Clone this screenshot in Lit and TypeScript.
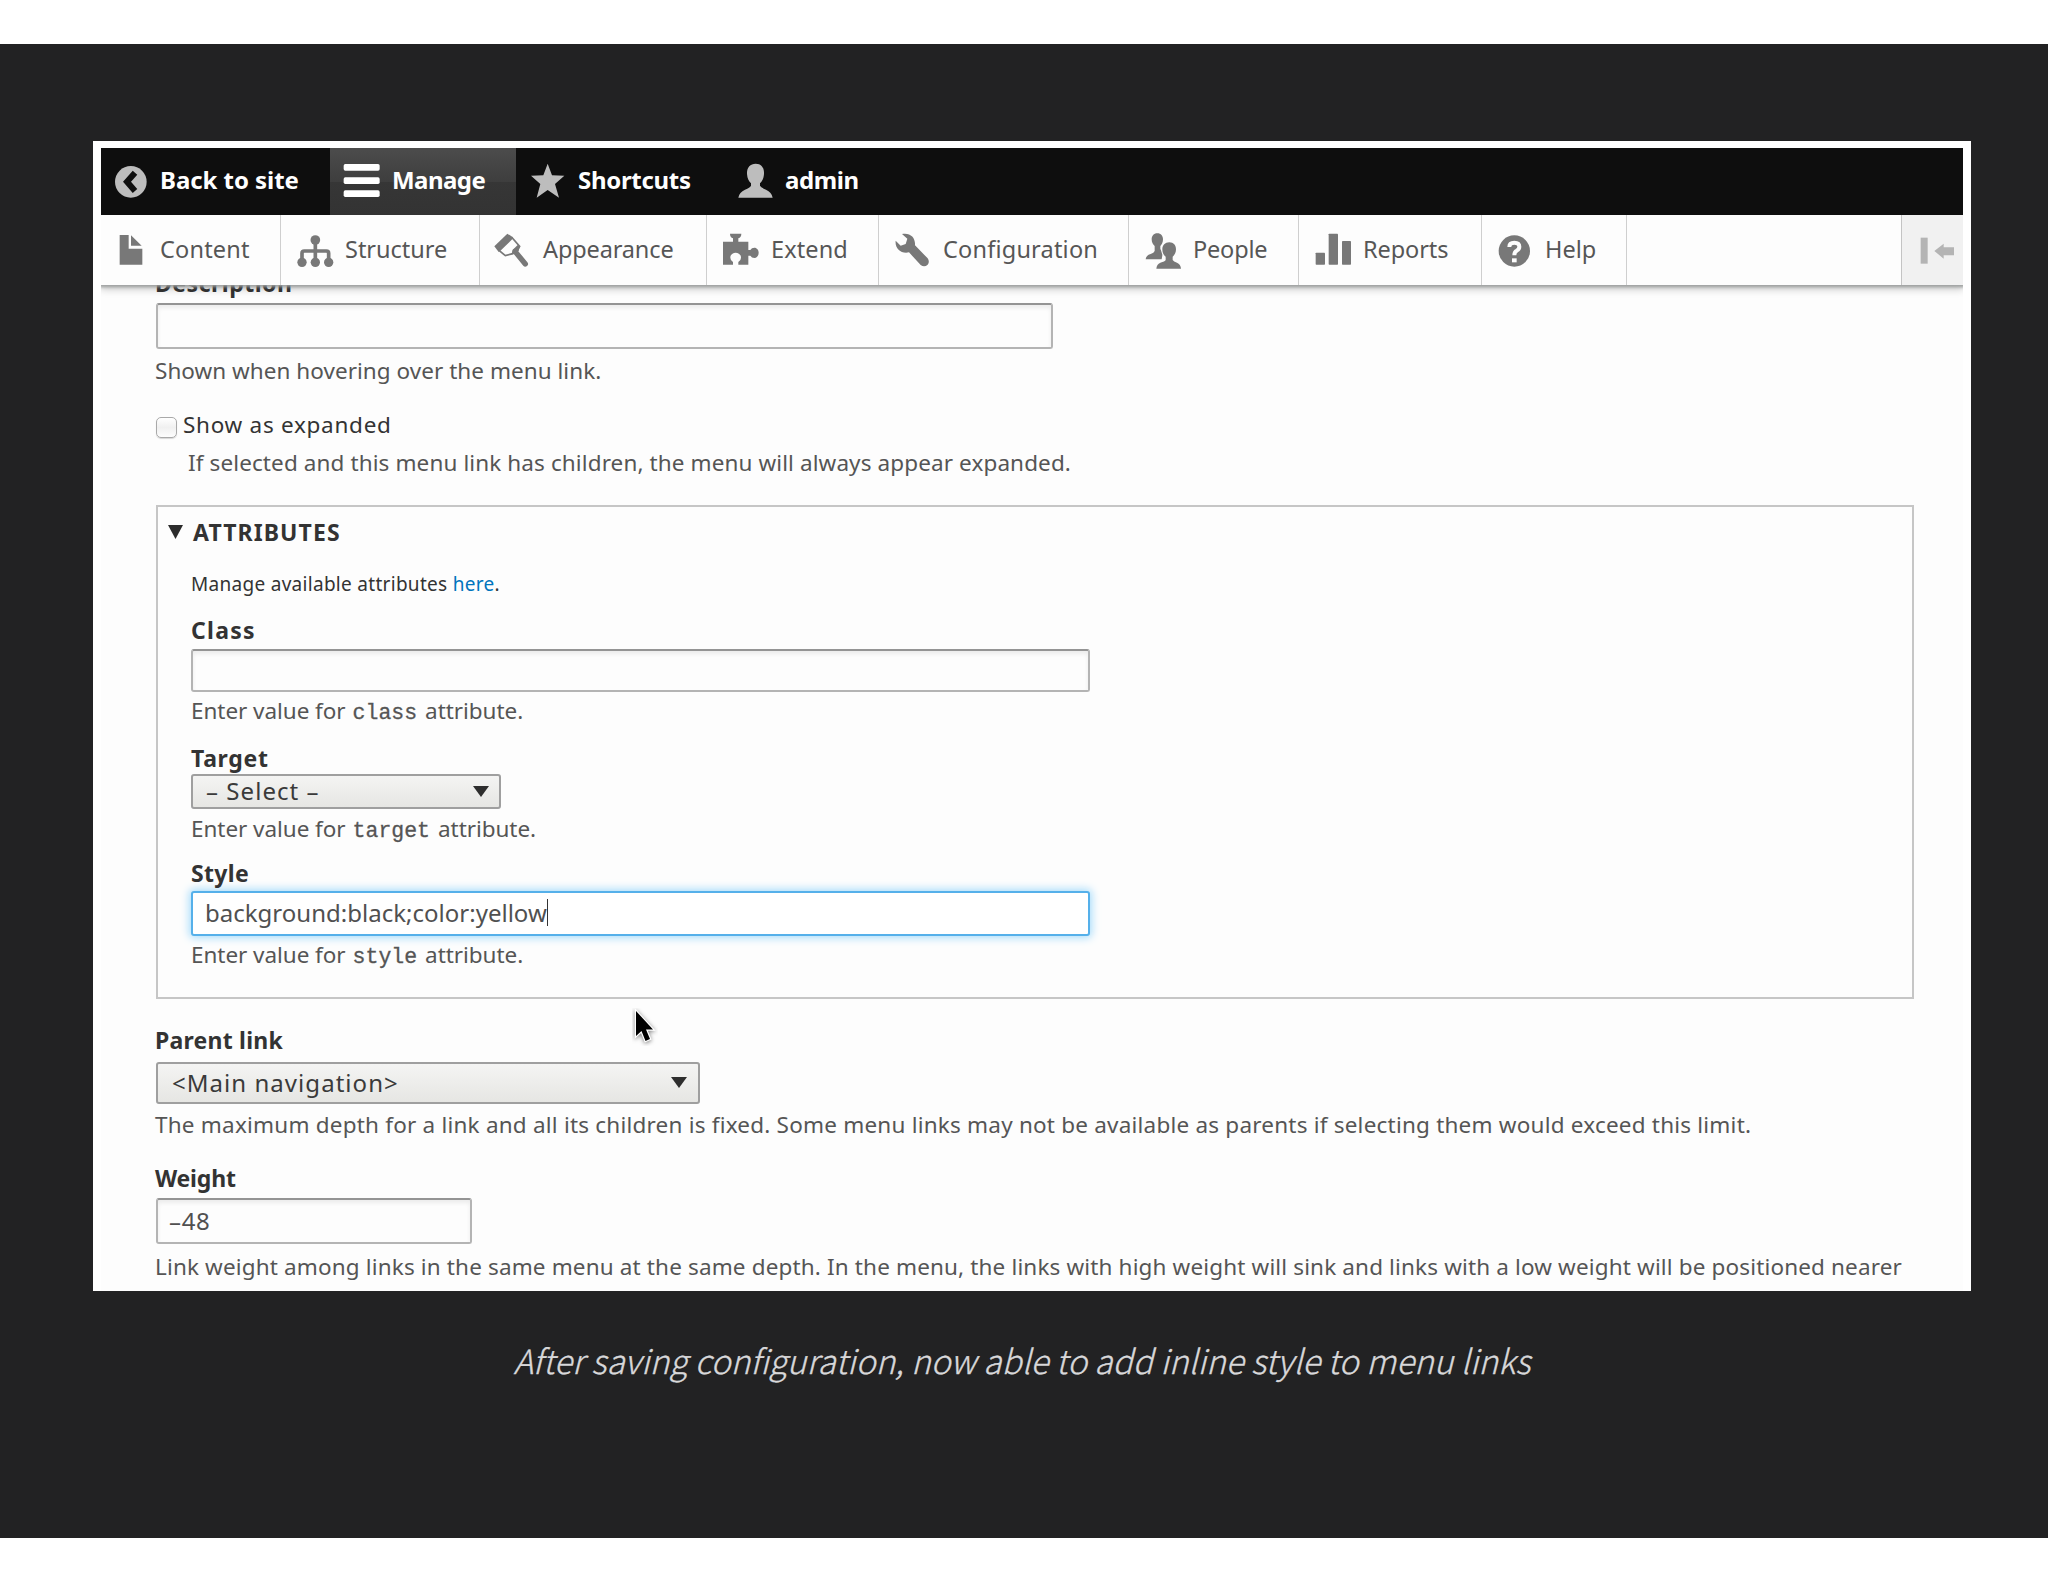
import { LitElement, html, css, svg } from "lit";
import type { TemplateResult, SVGTemplateResult } from "lit";
import { styleMap } from "lit/directives/style-map.js";

interface BarItem {
  label: string;
  width: number;
  iconWidth: number;
  viewBox: string;
  spacing: number;
  icon: SVGTemplateResult;
  active?: boolean;
}

const barItems: BarItem[] = [
  {
    label: "Back to site", width: 229, iconWidth: 59, viewBox: "63 54 177 201", spacing: -0.05,
    icon: svg`<circle cx="152.5" cy="155.5" r="47.5" fill="#bdbdbd"/><path d="M165 128 L141 155.5 L165 183" fill="none" stroke="#0f0f0f" stroke-width="18"/>`,
  },
  {
    label: "Manage", width: 186, iconWidth: 62, viewBox: "750 54 186 201", spacing: -0.55, active: true,
    icon: svg`<g fill="#fff"><rect x="791" y="102" width="108" height="20" rx="5"/><rect x="791" y="142" width="108" height="20" rx="5"/><rect x="791" y="181" width="108" height="20" rx="5"/></g>`,
  },
  {
    label: "Shortcuts", width: 206, iconWidth: 62, viewBox: "48 54 186 201", spacing: -0.3,
    icon: svg`<path fill="#bdbdbd" d="M143 101 L156 136 L193 137 L165 162 L177 203 L143 180 L110 203 L121 162 L93 137 L130 136Z"/>`,
  },
  {
    label: "admin", width: 160, iconWidth: 63, viewBox: "666 54 189 201", spacing: -0.4,
    icon: svg`<g fill="#bdbdbd"><path d="M767 101 C784 101 793 113 792 132 C791 146 786 154 780 160 V167 Q783 173 798 179 Q815 186 818 203 H715 Q718 186 735 179 Q750 173 753 167 V160 C747 154 742 146 741 132 C740 113 750 101 767 101Z"/></g>`,
  },
];

const trayItems: BarItem[] = [
  {
    label: "Content", width: 180, iconWidth: 59, viewBox: "63 255 177 210", spacing: 0.19,
    icon: svg`<path d="M119 315 H146 V356 H187 V404 H119Z M153 316 L185 347 H153Z"/>`,
  },
  {
    label: "Structure", width: 199, iconWidth: 64, viewBox: "603 255 192 210", spacing: -0.02,
    icon: svg`<circle cx="706" cy="330" r="14.5"/><circle cx="666" cy="397" r="14"/><circle cx="706" cy="397" r="14"/><circle cx="746" cy="397" r="14"/><path d="M706 330 V397 M666 397 V370 Q666 363 673 363 H739 Q746 363 746 370 V397" fill="none" stroke="#787878" stroke-width="11"/>`,
  },
  {
    label: "Appearance", width: 227, iconWidth: 63, viewBox: "1200 255 189 210", spacing: -0.13,
    icon: svg`<path d="M1243 349 L1282 311 L1299 322 L1256 366Z"/><path d="M1258 362 L1297 324 L1319 349 L1312 362 L1298 371 L1276 377Z" fill="#fdfdfd" stroke="#787878" stroke-width="5"/><path d="M1300 358 L1313 345 L1319 349 L1316 362 L1306 372 L1294 373Z"/><path d="M1305 364 L1336 402" fill="none" stroke="#787878" stroke-width="16" stroke-linecap="round"/>`,
  },
  {
    label: "Extend", width: 172, iconWidth: 64, viewBox: "621 255 192 210", spacing: 0.11,
    icon: svg`<path d="M669 335 H699 V325 Q690 322 690 311 H724 Q724 322 715 325 V335 H745 V360 H751 Q755 353 763 353 C771 353 776 360 776 368 C776 377 771 384 763 384 Q755 384 751 377 H745 V404 H715 V396 Q723 391 723 383 C723 374 716 368 707 368 C698 368 691 374 691 383 Q691 391 699 396 V404 H669Z"/>`,
  },
  {
    label: "Configuration", width: 250, iconWidth: 64, viewBox: "57 255 192 210", spacing: 0.2,
    icon: svg`<path d="M126 312 C150 307 167 322 165 346 L203 385 Q210 396 203 404 Q193 413 182 405 L147 367 C124 372 104 357 107 332 L122 347 L137 342 L142 326Z"/>`,
  },
  {
    label: "People", width: 170, iconWidth: 64, viewBox: "807 255 192 210", spacing: -0.18,
    icon: svg`<path d="M892 310 C903 310 909 318 909 328 C909 338 905 343 901 348 V357 L908 370 L905 388 H857 Q858 376 872 372 Q882 369 884 363 V348 C879 343 875 338 875 328 C875 318 881 310 892 310Z"/><path stroke="#fdfdfd" stroke-width="7" paint-order="stroke" d="M928 337 C941 337 948 346 948 358 C948 369 943 375 938 380 V390 Q941 395 951 398 Q962 403 963 416 H889 Q890 403 901 398 Q915 395 917 390 V380 C911 375 907 369 907 358 C907 346 915 337 928 337Z"/>`,
  },
  {
    label: "Reports", width: 183, iconWidth: 64, viewBox: "0 255 192 210", spacing: -0.08,
    icon: svg`<rect x="50" y="368" width="28" height="36" rx="2"/><rect x="89" y="311" width="28" height="93" rx="2"/><rect x="129" y="333" width="27" height="71" rx="2"/>`,
  },
  {
    label: "Help", width: 145, iconWidth: 63, viewBox: "0 255 189 210", spacing: -0.01,
    icon: svg`<circle cx="97" cy="363" r="47"/><path d="M82 351 Q82 338 97 338 Q112 338 112 350 Q112 357 104 362 Q97 366 97 376" fill="none" stroke="#fdfdfd" stroke-width="12"/><rect x="90" y="385" width="14" height="12" fill="#fdfdfd"/>`,
  },
];

const spaced = (v: number) => styleMap({ letterSpacing: `${v}px` });

class AdminBar extends LitElement {
  static styles = css`
    :host { display: block; position: relative; z-index: 2; font-family: "Noto Sans", sans-serif; }
    .bar { display: flex; height: 67px; background: #0e0e0e; }
    .item { display: flex; box-sizing: border-box; flex: none; white-space: nowrap; }
    .item svg { flex: none; display: block; }
    .bar .item { color: #fff; font-size: 24px; font-weight: 700; line-height: 64px; }
    .bar .active { background: linear-gradient(#4c4c4c, #3e3e3e 50%, #363636 50%, #333); }
    .tray { display: flex; height: 70px; background: #fdfdfd; box-shadow: 0 0 3px 2px #9c9f9e, 0 3px 8px 1px rgba(0, 0, 0, 0.22); clip-path: inset(0 0 -14px 0); }
    .tray .item { color: #565656; fill: #787878; font-size: 23.5px; line-height: 69px; border-right: 1px solid #cfcfcf; }
    .toggle { margin-left: auto; width: 61px; box-sizing: border-box; background: #f1f1f1; box-shadow: -1px 0 #c4c4c4; }
    .toggle svg { display: block; fill: #b4b4b4; }
  `;
  private item(i: BarItem, height: number): TemplateResult {
    return html`<div class="item ${i.active ? "active" : ""}" style=${styleMap({ width: `${i.width}px` })}>
      <svg width=${i.iconWidth} height=${height} viewBox=${i.viewBox}>${i.icon}</svg><span style=${spaced(i.spacing)}>${i.label}</span>
    </div>`;
  }
  render() {
    return html`
      <nav class="bar">${barItems.map((i) => this.item(i, 67))}</nav>
      <nav class="tray">
        ${trayItems.map((i) => this.item(i, 70))}
        <div class="toggle">
          <svg width="61" height="70" viewBox="0 255 183 210"><rect x="56" y="323" width="21" height="78"/><path d="M97 363 L125 341 V352 H156 V376 H125 V386Z"/></svg>
        </div>
      </nav>`;
  }
}
customElements.define("admin-bar", AdminBar);

class MenuLinkForm extends LitElement {
  static styles = css`
    :host { display: block; flex: 1; min-height: 0; overflow: hidden; font-family: "Noto Sans", sans-serif; color: #333; }
    .form { padding-left: 54px; margin-top: -17px; }
    .label, .help, .check { height: 30px; line-height: 30px; white-space: nowrap; }
    .label { font-size: 23px; font-weight: 700; }
    .help { font-size: 22.5px; line-height: 31px; color: #555; }
    .box { box-sizing: border-box; margin-left: 1px; display: flex; align-items: center; white-space: nowrap; font-size: 24px; color: #505050; border: 2px solid #b4b4b4; border-top-color: #949494; border-radius: 3px; background: #fdfdfd; box-shadow: inset 0 3px 4px rgba(0, 0, 0, 0.07); }
    .select { justify-content: space-between; color: #3a3a3a; border-color: #9f9f9f; background: linear-gradient(#f4f4f3, #e6e6e3); box-shadow: none; }
    .select svg { fill: #2e2e2e; flex: none; }
    .description { margin-top: 5px; width: 897px; height: 46px; }
    .description-help { margin-top: 6px; letter-spacing: 0.04px; }
    .check { margin: 25px 0 0 1px; display: flex; font-size: 22.5px; letter-spacing: 0.72px; }
    .tick { box-sizing: border-box; width: 21px; height: 21px; margin: 7px 6px 0 0; border: 1.5px solid #a9a9a9; border-radius: 5px; background: linear-gradient(#fff, #f0f0f0 50%, #fdfdfd); box-shadow: 0 1px 1px rgba(0, 0, 0, 0.15); }
    .check-help { margin: 7px 0 0 33px; letter-spacing: 0.11px; }
    .details { box-sizing: border-box; margin: 28px 0 0 1px; width: 1758px; height: 494px; border: 2px solid #c6c6c6; padding: 10px 0 0 33px; }
    .details .box { margin-left: 0; }
    .summary { display: flex; margin-left: -23px; letter-spacing: 1.08px; }
    .summary svg { margin: 8px 9px 0 0; fill: #2c2c2c; flex: none; width: 16px; }
    .manage { margin-top: 22px; height: 30px; line-height: 31px; font-size: 19px; letter-spacing: 0.293px; white-space: nowrap; }
    .manage a { color: #0074bd; text-decoration: none; }
    .class-label { margin-top: 16px; letter-spacing: 1.264px; }
    .wide { width: 899px; }
    .class-box { margin-top: 4px; height: 43px; }
    .attr { display: flex; line-height: 32px; letter-spacing: -0.05px; }
    .attr code { font-family: "Liberation Mono", monospace; font-size: 21.5px; line-height: 36px; letter-spacing: 0; padding: 0 8px 0 7px; -webkit-text-stroke: 0.3px #555; }
    .class-help { margin-top: 3px; }
    .target-label { margin-top: 18px; letter-spacing: 0.695px; }
    .target-box { margin-top: 1px; width: 310px; height: 35px; padding: 0 10px 2px 13px; letter-spacing: 1.05px; }
    .target-box svg { margin-top: 2px; }
    .target-help { margin-top: 4px; }
    .style-label { margin-top: 15px; letter-spacing: 0.34px; }
    .style-box { margin-top: 3px; height: 45px; padding: 0 0 2px 12px; border-color: #55b0ea; background: #fff; box-shadow: 0 0 8px 2px #a9ddfb; letter-spacing: 0.01px; }
    .caret { width: 1.5px; height: 27px; background: #333; }
    .style-help { margin-top: 3px; }
    .parent-label { margin-top: 26px; letter-spacing: 0.22px; }
    .parent-box { margin-top: 7px; width: 544px; height: 42px; padding: 0 11px 2px 14px; letter-spacing: 1.042px; }
    .parent-help { margin-top: 5px; letter-spacing: 0.212px; }
    .weight-label { margin-top: 24px; letter-spacing: -0.2px; }
    .weight-box { margin-top: 5px; width: 316px; height: 46px; padding: 0 0 2px 11px; letter-spacing: 0.636px; }
    .weight-help { margin-top: 7px; letter-spacing: 0.147px; }
  `;
  private attrHelp(name: string, cls: string) {
    return html`<div class="help attr ${cls}"><span>Enter value for</span><code>${name}</code><span>attribute.</span></div>`;
  }
  render() {
    const arrow = html`<svg width="16" height="11" viewBox="0 0 16 11"><path d="M0 0H16L8 11Z"/></svg>`;
    return html`<div class="form">
      <div class="label" style=${spaced(0.509)}>Description</div>
      <div class="box description"></div>
      <div class="help description-help">Shown when hovering over the menu link.</div>
      <div class="check"><span class="tick"></span>Show as expanded</div>
      <div class="help check-help">If selected and this menu link has children, the menu will always appear expanded.</div>
      <section class="details">
        <div class="label summary"><svg height="14" viewBox="0 0 16 14"><path d="M0 0H15L7.5 14Z"/></svg>ATTRIBUTES</div>
        <div class="manage">Manage available attributes <a>here</a>.</div>
        <div class="label class-label">Class</div>
        <div class="box wide class-box"></div>
        ${this.attrHelp("class", "class-help")}
        <div class="label target-label">Target</div>
        <div class="box select target-box"><span>– Select –</span>${arrow}</div>
        ${this.attrHelp("target", "target-help")}
        <div class="label style-label">Style</div>
        <div class="box wide style-box"><span>background:black;color:yellow</span><i class="caret"></i></div>
        ${this.attrHelp("style", "style-help")}
      </section>
      <div class="label parent-label">Parent link</div>
      <div class="box select parent-box"><span>&lt;Main navigation&gt;</span>${arrow}</div>
      <div class="help parent-help">The maximum depth for a link and all its children is fixed. Some menu links may not be available as parents if selecting them would exceed this limit.</div>
      <div class="label weight-label">Weight</div>
      <div class="box weight-box">–48</div>
      <div class="help weight-help">Link weight among links in the same menu at the same depth. In the menu, the links with high weight will sink and links with a low weight will be positioned nearer</div>
    </div>`;
  }
}
customElements.define("menu-link-form", MenuLinkForm);

class AppRoot extends LitElement {
  static styles = css`
    :host { display: block; box-sizing: border-box; height: 1582px; padding: 44px 0; background: #fff; }
    .slide { position: relative; height: 1494px; background: #222223; overflow: hidden; }
    .shot { box-sizing: border-box; display: flex; flex-direction: column; width: 1878px; height: 1150px; margin: 97px 0 0 93px; border: solid #fff; border-width: 7px 8px 0; background: #fdfdfd; }
    .caption { margin: 39px 4px 0 0; text-align: center; color: #d8d8da; font: italic 300 33.35px/60px "Noto Sans CJK SC", sans-serif; -webkit-text-stroke: 0.35px #d8d8da; }
    .pointer { position: absolute; left: 632px; top: 964px; }
  `;
  render() {
    return html`<main class="slide">
      <div class="shot"><admin-bar></admin-bar><menu-link-form></menu-link-form></div>
      <div class="caption">After saving configuration, now able to add inline style to menu links</div>
      <svg class="pointer" width="26" height="38" viewBox="0 0 26 38"><path d="M4 3 V28 L9.5 23 L13.5 33 L18 31 L14 21.5 H21Z" fill="#000" stroke="#fff" stroke-width="2.4" paint-order="stroke" style="filter:drop-shadow(0 1px 2px rgba(0,0,0,.5))"/></svg>
    </main>`;
  }
}
customElements.define("app-root", AppRoot);
